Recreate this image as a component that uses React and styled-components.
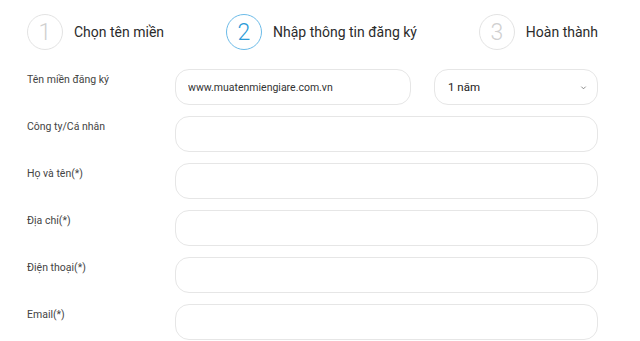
import React from "react";
import styled, { createGlobalStyle } from "styled-components";

const GlobalStyle = createGlobalStyle`
	body {
		margin: 0;
		background: #fff;
		font-family: Roboto, "Liberation Sans", sans-serif;
		color: #333;
	}
`;

const Page = styled.div`
	width: 571px;
	padding: 14px 0 0 27px;
`;

const Steps = styled.ol`
	list-style: none;
	margin: 0;
	padding: 0;
	display: flex;
	justify-content: space-between;
	align-items: center;
`;

const Step = styled.li`
	display: flex;
	align-items: center;
	gap: 11px;
`;

const Circle = styled.span`
	box-sizing: border-box;
	width: 36px;
	height: 36px;
	border-radius: 50%;
	border: 1px solid ${(p) => (p.$active ? "#6cbbe8" : "#e3e3e3")};
	color: ${(p) => (p.$active ? "#2a9ad8" : "#d0d0d0")};
	display: flex;
	align-items: center;
	justify-content: center;
	font-size: 23px;
	font-weight: 300;
`;

const StepLabel = styled.span`
	font-size: 14px;
	color: #2b2b2b;
`;

const Form = styled.form`
	margin-top: 19px;
	display: grid;
	grid-template-columns: 148px 1fr;
	row-gap: 11px;
`;

const Label = styled.label`
	font-size: 10.5px;
	color: #444;
	padding-top: 4px;
`;

const Fields = styled.div`
	display: flex;
	gap: 23px;
`;

const Input = styled.input`
	box-sizing: border-box;
	flex: 1;
	width: 100%;
	height: 36px;
	border: 1px solid #e6e6e6;
	border-radius: 14px;
	padding: 0 12px;
	font-family: inherit;
	font-size: 10.5px;
	color: #333;
	background: #fff;
	outline: none;
`;

const Select = styled.div`
	box-sizing: border-box;
	width: 164px;
	height: 36px;
	border: 1px solid #e6e6e6;
	border-radius: 14px;
	padding: 0 10px 0 13px;
	display: flex;
	align-items: center;
	justify-content: space-between;
	font-size: 11.5px;
	color: #222;

	svg {
		width: 7px;
		height: 7px;
	}
`;

const steps = [
	{ n: 1, label: "Chọn tên miền" },
	{ n: 2, label: "Nhập thông tin đăng ký", active: true },
	{ n: 3, label: "Hoàn thành" },
];

const fields = ["Công ty/Cá nhân", "Họ và tên(*)", "Địa chỉ(*)", "Điện thoại(*)", "Email(*)"];

const App = () => (
	<Page>
		<GlobalStyle />
		<Steps>
			{steps.map((s) => (
				<Step key={s.n}>
					<Circle $active={s.active}>{s.n}</Circle>
					<StepLabel>{s.label}</StepLabel>
				</Step>
			))}
		</Steps>

		<Form>
			<Label>Tên miền đăng ký</Label>
			<Fields>
				<Input defaultValue="www.muatenmiengiare.com.vn" />
				<Select>
					1 năm
					<svg viewBox="0 0 8 8" fill="none" stroke="#777" strokeWidth="1">
						<path d="M1.5 3l2.5 2.5L6.5 3" />
					</svg>
				</Select>
			</Fields>
			{fields.map((f) => (
				<React.Fragment key={f}>
					<Label>{f}</Label>
					<Input />
				</React.Fragment>
			))}
		</Form>
	</Page>
);

export default App;
